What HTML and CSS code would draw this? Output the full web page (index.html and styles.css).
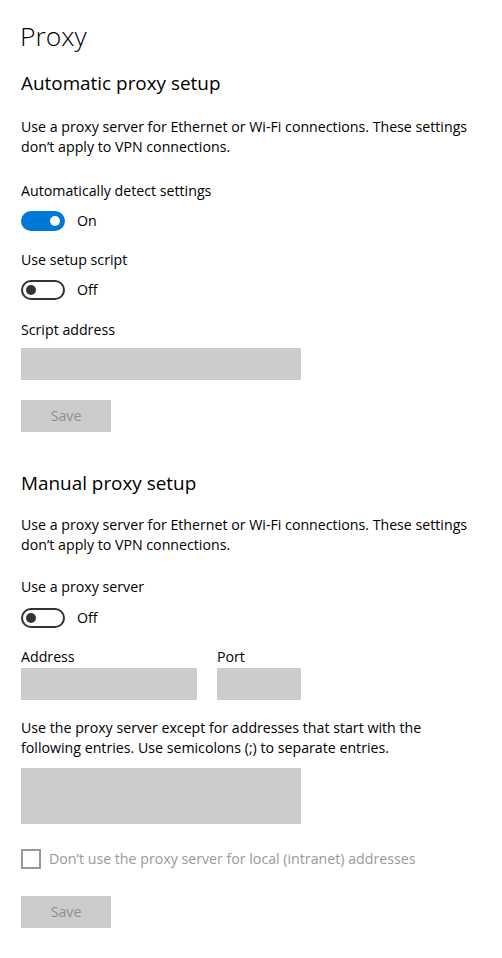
FILE: index.html
```html
<!DOCTYPE html>
<html lang="en">
<head>
<meta charset="utf-8">
<title>Proxy</title>
<link rel="stylesheet" href="styles.css">
</head>
<body>
<main class="page">
  <h1 class="title">Proxy</h1>

  <section class="section">
    <h2 class="heading">Automatic proxy setup</h2>
    <p class="desc">Use a proxy server for Ethernet or Wi-Fi connections. These settings<br>don’t apply to VPN connections.</p>

    <div class="label label-first">Automatically detect settings</div>
    <div class="toggle-row">
      <span class="toggle toggle-on"><span class="knob"></span></span>
      <span class="toggle-text">On</span>
    </div>

    <div class="label">Use setup script</div>
    <div class="toggle-row">
      <span class="toggle toggle-off"><span class="knob"></span></span>
      <span class="toggle-text">Off</span>
    </div>

    <div class="label label-field">Script address</div>
    <div class="input input-wide"></div>
    <div class="button">Save</div>
  </section>

  <section class="section section-manual">
    <h2 class="heading">Manual proxy setup</h2>
    <p class="desc">Use a proxy server for Ethernet or Wi-Fi connections. These settings<br>don’t apply to VPN connections.</p>

    <div class="label label-first2">Use a proxy server</div>
    <div class="toggle-row">
      <span class="toggle toggle-off"><span class="knob"></span></span>
      <span class="toggle-text">Off</span>
    </div>

    <div class="addr-row">
      <div class="field">
        <div class="label label-tight">Address</div>
        <div class="input input-addr"></div>
      </div>
      <div class="field">
        <div class="label label-tight">Port</div>
        <div class="input input-port"></div>
      </div>
    </div>

    <p class="desc desc-except">Use the proxy server except for addresses that start with the<br>following entries. Use semicolons (;) to separate entries.</p>
    <div class="input input-area"></div>

    <div class="check-row">
      <span class="checkbox"></span>
      <span class="check-text">Don’t use the proxy server for local (intranet) addresses</span>
    </div>
    <div class="button button-last">Save</div>
  </section>
</main>
</body>
</html>
```

FILE: styles.css
```css
html, body {
  margin: 0;
  padding: 0;
  background: #ffffff;
}

body {
  font-family: "Open Sans", "Noto Sans", "Liberation Sans", sans-serif;
  color: #000000;
  font-size: 14.2px;
  line-height: 20px;
}

.page {
  padding: 17px 0 30px 21px;
}

.title {
  margin: 0 0 0 -1px;
  font-size: 26.5px;
  font-weight: 300;
  line-height: 38px;
}

.heading {
  margin: 14px 0 0 0;
  font-size: 18.9px;
  font-weight: 400;
  line-height: 28px;
}

.section-manual .heading {
  margin-top: 37px;
}

.desc {
  margin: 20px 0 0 0;
  line-height: 20px;
}

.section-manual .desc {
  margin-top: 18px;
}

.label {
  margin-top: 19px;
  line-height: 20px;
}

.label-first {
  margin-top: 24px;
}

.section-manual .label-first2 {
  margin-top: 22px;
}

.label-field {
  margin-top: 20px;
}

.toggle-row {
  display: flex;
  align-items: center;
  gap: 12px;
  margin-top: 10px;
  height: 20px;
}

.section-manual .toggle-row {
  margin-top: 11px;
}

.toggle {
  box-sizing: border-box;
  width: 44px;
  height: 20px;
  border-radius: 10px;
  display: flex;
  align-items: center;
}

.toggle-on {
  background: #0078d7;
  justify-content: flex-end;
  padding-right: 5px;
}

.toggle-on .knob {
  background: #ffffff;
}

.toggle-off {
  border: 2px solid #333333;
  padding-left: 3px;
}

.toggle-off .knob {
  background: #333333;
}

.knob {
  width: 10px;
  height: 10px;
  border-radius: 50%;
}

.toggle-text {
  line-height: 20px;
}

.input {
  background: #cccccc;
  height: 32px;
}

.input-wide {
  width: 280px;
  margin-top: 8px;
}

.button {
  width: 90px;
  height: 32px;
  margin-top: 20px;
  background: #cccccc;
  color: #8f8f8f;
  display: flex;
  align-items: center;
  justify-content: center;
}

.addr-row {
  display: flex;
  gap: 20px;
  margin-top: 19px;
}

.label-tight {
  margin-top: 0;
}

.input-addr {
  width: 176px;
  margin-top: 1px;
}

.input-port {
  width: 84px;
  margin-top: 1px;
}

.section-manual .desc-except {
  margin-top: 18px;
}

.input-area {
  width: 280px;
  height: 56px;
  margin-top: 10px;
}

.check-row {
  display: flex;
  align-items: center;
  gap: 8px;
  margin-top: 25px;
  height: 20px;
}

.checkbox {
  box-sizing: border-box;
  width: 20px;
  height: 20px;
  border: 2px solid #999999;
}

.check-text {
  color: #999999;
}

.button-last {
  margin-top: 27px;
}
```
